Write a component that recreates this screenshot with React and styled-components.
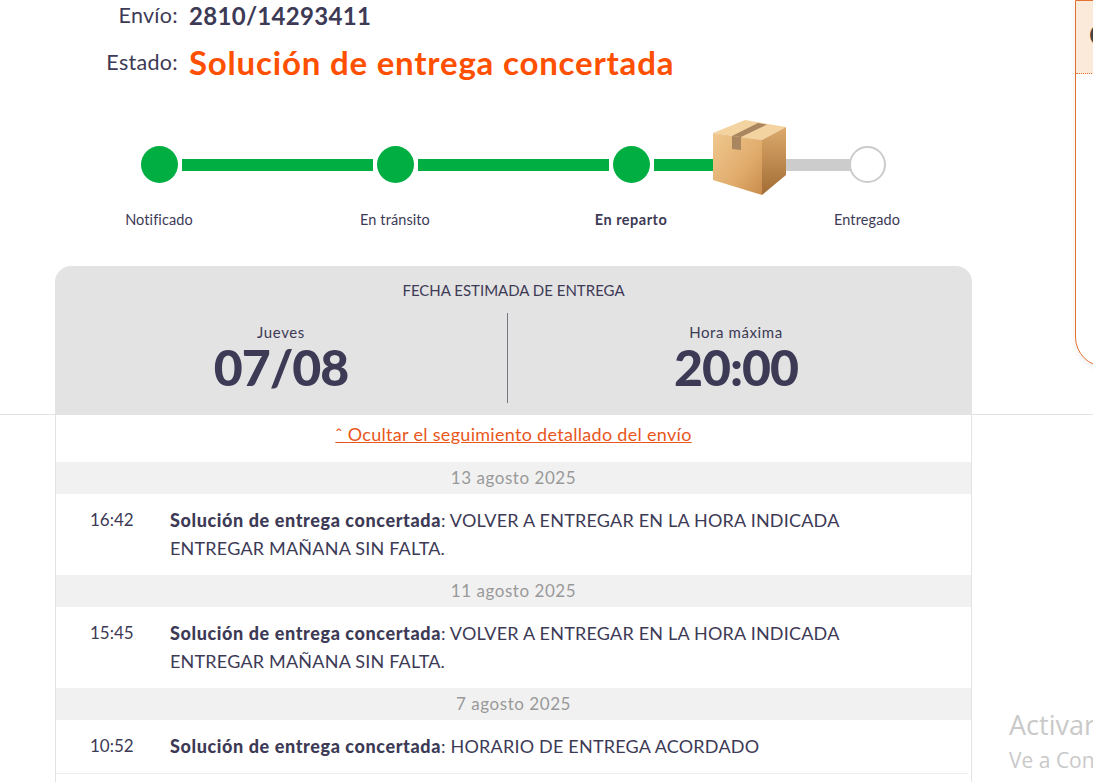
import React from "react";
import styled, { createGlobalStyle } from "styled-components";

const steps = [
    { label: "Notificado" },
    { label: "En tránsito" },
    { label: "En reparto", current: true },
    { label: "Entregado" },
];

const events = [
    {
        date: "13 agosto 2025",
        time: "16:42",
        note: "VOLVER A ENTREGAR EN LA HORA INDICADA ENTREGAR MAÑANA SIN FALTA.",
    },
    {
        date: "11 agosto 2025",
        time: "15:45",
        note: "VOLVER A ENTREGAR EN LA HORA INDICADA ENTREGAR MAÑANA SIN FALTA.",
    },
    {
        date: "7 agosto 2025",
        time: "10:52",
        note: "HORARIO DE ENTREGA ACORDADO",
        last: true,
    },
];

function ParcelBox() {
    return (
        <BoxIcon viewBox="0 0 73 75" aria-hidden="true">
            <defs>
                <linearGradient id="boxFront" x1="0" y1="0" x2="1" y2="1">
                    <stop offset="0" stopColor="#f0c88f" />
                    <stop offset="0.6" stopColor="#e0ac6c" />
                    <stop offset="1" stopColor="#c98c4c" />
                </linearGradient>
                <linearGradient id="boxSide" x1="0" y1="0" x2="0" y2="1">
                    <stop offset="0" stopColor="#dcaa6c" />
                    <stop offset="1" stopColor="#a26c34" />
                </linearGradient>
            </defs>
            <polygon points="0,13 32,0 73,7 49,20" fill="#f3d3a0" />
            <polygon points="0,13 49,20 49,75 0,60" fill="url(#boxFront)" />
            <polygon points="49,20 73,7 73,55 49,75" fill="url(#boxSide)" />
            <polygon points="19,16 28,17 54,4.5 45,3" fill="#a98660" />
            <polygon points="19,16 28,17 28,30 19,29" fill="#a98660" />
        </BoxIcon>
    );
}

export default function App() {
    return (
        <Page>
            <GlobalStyle />
            <TopSection>
                <Main>
                    <InfoRow>
                        <InfoLabel>Envío:</InfoLabel>
                        <ShipmentNumber>2810/14293411</ShipmentNumber>
                    </InfoRow>
                    <StatusRow>
                        <InfoLabel>Estado:</InfoLabel>
                        <StatusValue>Solución de entrega concertada</StatusValue>
                    </StatusRow>

                    <Track>
                        <Dot $done />
                        <Bar $done />
                        <Dot $done />
                        <Bar $done />
                        <Dot $done />
                        <LastBar>
                            <BarPart $done $width={59} />
                            <BarPart />
                            <ParcelBox />
                        </LastBar>
                        <Dot />
                    </Track>
                    <StepLabels>
                        {steps.map((step) => (
                            <StepLabel key={step.label} $current={step.current}>
                                {step.label}
                            </StepLabel>
                        ))}
                    </StepLabels>

                    <EstimateCard>
                        <EstimateTitle>Fecha estimada de entrega</EstimateTitle>
                        <EstimateColumns>
                            <EstimateColumn>
                                <EstimateCaption>Jueves</EstimateCaption>
                                <EstimateValue>07/08</EstimateValue>
                            </EstimateColumn>
                            <EstimateColumn $divided>
                                <EstimateCaption>Hora máxima</EstimateCaption>
                                <EstimateValue>20:00</EstimateValue>
                            </EstimateColumn>
                        </EstimateColumns>
                    </EstimateCard>
                </Main>

                <SidePanel>
                    <SidePanelHeader>
                        <SidePanelTitle>Opciones</SidePanelTitle>
                    </SidePanelHeader>
                </SidePanel>
            </TopSection>

            <Details>
                <ToggleRow>
                    <ToggleLink href="#">ˆ Ocultar el seguimiento detallado del envío</ToggleLink>
                </ToggleRow>
                {events.map((event) => (
                    <section key={event.date}>
                        <DateBar>{event.date}</DateBar>
                        <EventRow $last={event.last}>
                            <EventTime>{event.time}</EventTime>
                            <EventText>
                                <strong>Solución de entrega concertada</strong>: {event.note}
                            </EventText>
                        </EventRow>
                    </section>
                ))}
            </Details>

            <Watermark>
                <WatermarkTitle>Activar Windows</WatermarkTitle>
                <WatermarkText>Ve a Configuración para activar Windows.</WatermarkText>
            </Watermark>
        </Page>
    );
}

const GlobalStyle = createGlobalStyle`
    html, body {
        margin: 0;
        padding: 0;
        background: #ffffff;
    }
    * {
        box-sizing: border-box;
    }
`;

const Page = styled.div`
    position: relative;
    width: 1093px;
    height: 782px;
    overflow: hidden;
    font-family: Lato, "Open Sans", sans-serif;
    color: #3d3a56;
`;

const TopSection = styled.div`
    display: flex;
    align-items: flex-start;
    height: 415px;
    padding-left: 55px;
    border-bottom: 1px solid #e3e3e3;
`;

const Main = styled.div`
    display: flex;
    flex-direction: column;
    flex: 0 0 917px;
    min-width: 0;
`;

const InfoRow = styled.div`
    display: flex;
    align-items: center;
    height: 30px;
    gap: 11px;
`;

const StatusRow = styled(InfoRow)`
    height: 64px;
`;

const InfoLabel = styled.span`
    width: 123px;
    text-align: right;
    font-size: 21.5px;
    letter-spacing: 0.3px;
`;

const ShipmentNumber = styled.span`
    font-size: 24px;
    font-weight: 700;
    letter-spacing: 0.3px;
`;

const StatusValue = styled.span`
    font-size: 33px;
    font-weight: 700;
    letter-spacing: 0.8px;
    color: #ff4f00;
`;

const Track = styled.div`
    display: flex;
    align-items: center;
    gap: 4px;
    width: 745px;
    height: 37px;
    margin: 52px 0 0 86px;
`;

const Dot = styled.span`
    flex: 0 0 37px;
    height: 37px;
    border-radius: 50%;
    background: ${(props) => (props.$done ? "#00ae42" : "#ffffff")};
    border: ${(props) => (props.$done ? "none" : "2px solid #cccccc")};
`;

const Bar = styled.span`
    flex: 0 0 191px;
    height: 12px;
    background: ${(props) => (props.$done ? "#00ae42" : "#cccccc")};
`;

const LastBar = styled.div`
    position: relative;
    display: flex;
    flex: 1;
    height: 12px;
    margin-right: -5px;
`;

const BarPart = styled.span`
    flex: ${(props) => (props.$width ? `0 0 ${props.$width}px` : "1")};
    background: ${(props) => (props.$done ? "#00ae42" : "#cccccc")};
`;

const BoxIcon = styled.svg`
    position: absolute;
    left: 59px;
    top: -39px;
    width: 73px;
    height: 75px;
`;

const StepLabels = styled.div`
    display: flex;
    margin: 28px 0 0 -14px;
`;

const StepLabel = styled.span`
    flex: 0 0 236px;
    text-align: center;
    font-size: 14.5px;
    line-height: 18px;
    letter-spacing: ${(props) => (props.$current ? "0.5px" : "0.1px")};
    font-weight: ${(props) => (props.$current ? 700 : 400)};
`;

const EstimateCard = styled.div`
    display: flex;
    flex-direction: column;
    height: 148px;
    margin-top: 37px;
    padding-top: 15px;
    border-radius: 16px 16px 0 0;
    background: #e3e3e3;
`;

const EstimateTitle = styled.div`
    text-align: center;
    font-size: 15px;
    line-height: 18px;
    text-transform: uppercase;
`;

const EstimateColumns = styled.div`
    display: grid;
    grid-template-columns: 452px 1fr;
    margin-top: 14px;
`;

const EstimateColumn = styled.div`
    display: flex;
    flex-direction: column;
    align-items: center;
    height: 90px;
    padding-top: 10px;
    padding-right: ${(props) => (props.$divided ? "8px" : "0")};
    border-left: ${(props) => (props.$divided ? "1px solid #77767f" : "none")};
`;

const EstimateCaption = styled.span`
    font-size: 15px;
    line-height: 18px;
    letter-spacing: 0.6px;
`;

const EstimateValue = styled.span`
    margin-top: 1px;
    font-size: 50px;
    line-height: 50px;
    font-weight: 900;
    letter-spacing: -1px;
`;

const SidePanel = styled.aside`
    flex: 0 0 300px;
    height: 367px;
    margin-left: 103px;
    border: 1px solid #e2702f;
    border-bottom-left-radius: 30px;
    box-shadow: 0 2px 6px rgba(0, 0, 0, 0.08);
    overflow: hidden;
`;

const SidePanelHeader = styled.div`
    display: flex;
    align-items: center;
    height: 73px;
    padding: 0 0 6px 13px;
    background: #fbe9d9;
    border-bottom: 1px dotted #e2702f;
`;

const SidePanelTitle = styled.span`
    font-size: 30px;
    font-weight: 700;
    color: #444444;
`;

const Details = styled.div`
    width: 917px;
    height: 367px;
    margin-left: 55px;
    border-left: 1px solid #e3e3e3;
    border-right: 1px solid #e3e3e3;
`;

const ToggleRow = styled.div`
    display: flex;
    justify-content: center;
    align-items: center;
    height: 47px;
    padding-bottom: 9px;
`;

const ToggleLink = styled.a`
    font-size: 18px;
    letter-spacing: 0.3px;
    color: #e8561c;
    text-decoration: underline;
`;

const DateBar = styled.div`
    height: 32px;
    line-height: 31px;
    text-align: center;
    font-size: 17px;
    letter-spacing: 0.55px;
    color: #999999;
    background: #f1f1f1;
`;

const EventRow = styled.div`
    display: flex;
    padding: 11.5px 0 13.5px 34px;
    font-size: 18px;
    line-height: 28px;
    border-bottom: ${(props) => (props.$last ? "1px solid #ececec" : "none")};
    margin-right: ${(props) => (props.$last ? "3px" : "0")};
`;

const EventTime = styled.span`
    flex: 0 0 80px;
    font-size: 17px;
`;

const EventText = styled.p`
    width: 700px;
    margin: 0;
    letter-spacing: 0.2px;

    strong {
        font-weight: 900;
        letter-spacing: 0.6px;
    }
`;

const Watermark = styled.div`
    position: absolute;
    left: 1009px;
    top: 707px;
    white-space: nowrap;
    font-family: "Open Sans", sans-serif;
    color: #c9c9c9;
`;

const WatermarkTitle = styled.div`
    font-size: 27px;
    line-height: 36px;
`;

const WatermarkText = styled.div`
    font-size: 21px;
    line-height: 34px;
`;
